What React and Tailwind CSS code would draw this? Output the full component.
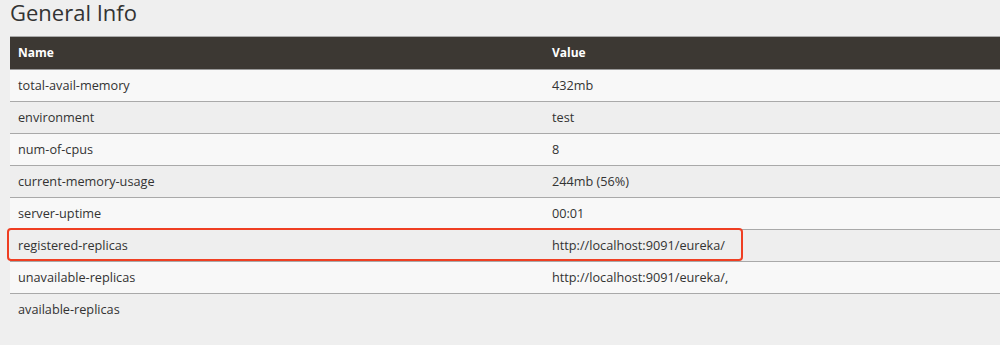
import React from 'react';

const rows = [
  ['total-avail-memory', '432mb'],
  ['environment', 'test'],
  ['num-of-cpus', '8'],
  ['current-memory-usage', '244mb (56%)'],
  ['server-uptime', '00:01'],
  ['registered-replicas', 'http://localhost:9091/eureka/'],
  ['unavailable-replicas', 'http://localhost:9091/eureka/,'],
  ['available-replicas', ''],
];

const App = () => {
  return (
    <div className="min-h-[345px] w-[1000px] overflow-hidden bg-[#efefef] pl-[10px] text-[#333]" style={{ fontFamily: '"Open Sans", "Noto Sans", sans-serif' }}>
      <h1 className="h-[36px] text-[22px] leading-[24px] font-normal text-[#333]">General Info</h1>

      <div className="w-[990px] border-t border-[#aaa]">
        <div className="flex h-[33px] items-center bg-[#3c3833] text-[12px] font-bold text-white border-b border-[#999]">
          <div className="w-[534px] pl-[8px]">Name</div>
          <div className="flex-1 pl-[8px]">Value</div>
        </div>

        {rows.map(([name, value], i) => {
          const last = i === rows.length - 1;
          const bg = last ? 'bg-[#efefef]' : i % 2 === 0 ? 'bg-[#f8f8f8]' : 'bg-[#eeeeee]';
          return (
            <div
              key={name}
              className={`relative flex h-[32px] items-center text-[12.7px] text-[#333] ${bg} ${last ? '' : 'border-b border-[#a9a9a9]'}`}
            >
              <div className="w-[534px] pl-[8px]">{name}</div>
              <div className="flex-1 pl-[8px]">{value}</div>
              {name === 'registered-replicas' && (
                <div className="absolute left-[-3px] top-[-2px] h-[33px] w-[736px] rounded-[4px] border-2 border-[#ef3e22]" />
              )}
            </div>
          );
        })}
      </div>
    </div>
  );
};

export default App;
